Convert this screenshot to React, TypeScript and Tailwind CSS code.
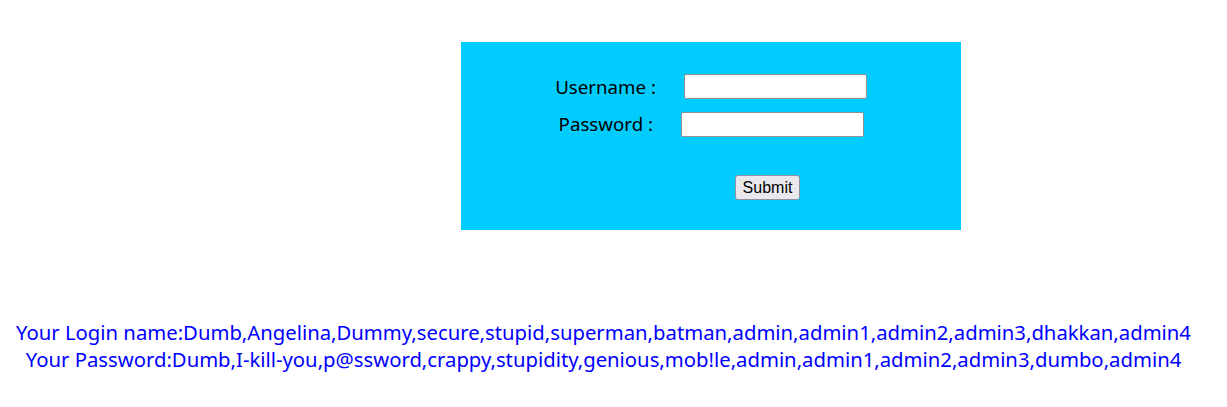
export default function App() {
  return (
    <div className="min-h-[407px] w-full bg-white" style={{ fontFamily: '"Noto Sans", sans-serif' }}>
      <div className="ml-[461px] pt-[42px]">
        <form className="flex h-[188px] w-[500px] flex-col bg-[#00ccff] pt-[32px]">
          <div className="flex h-[25px] items-center">
            <label className="w-[195px] pt-[1px] text-right text-[18.7px] text-black">Username :</label>
            <input type="text" className="ml-[28px] h-[25px] w-[183px] rounded-[2px] border border-[#8f8f8f] bg-white" />
          </div>
          <div className="mt-[13px] flex h-[25px] items-center">
            <label className="w-[192px] text-right text-[18.7px] text-black">Password :</label>
            <input type="password" className="ml-[28px] h-[25px] w-[183px] rounded-[2px] border border-[#8f8f8f] bg-white" />
          </div>
          <div className="mt-[38px] pl-[274px]">
            <button
              type="button"
              className="flex h-[25px] w-[65px] items-center justify-center rounded-[3px] border border-[#8f8f9d] bg-[#e9e9ed] text-[16px] text-black"
              style={{ fontFamily: '"Liberation Sans", Arial, sans-serif' }}
            >
              Submit
            </button>
          </div>
        </form>
      </div>
      <div className="mt-[89px] w-[1207px] text-center text-[20.3px] leading-[27px] text-[#0000ff]">
        <div>Your Login name:Dumb,Angelina,Dummy,secure,stupid,superman,batman,admin,admin1,admin2,admin3,dhakkan,admin4</div>
        <div>Your Password:Dumb,I-kill-you,p@ssword,crappy,stupidity,genious,mob!le,admin,admin1,admin2,admin3,dumbo,admin4</div>
      </div>
    </div>
  );
}
